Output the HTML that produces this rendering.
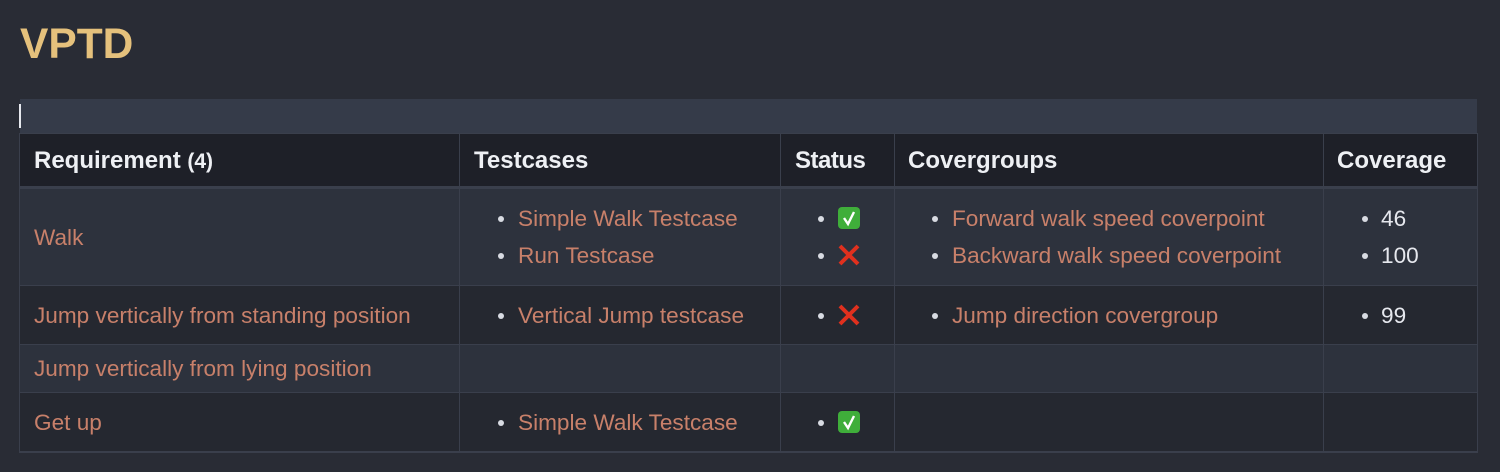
<!DOCTYPE html>
<html><head><style>
*{margin:0;padding:0;box-sizing:border-box}
body{width:1500px;height:472px;background:#292c35;font-family:"Liberation Sans",sans-serif;position:relative;overflow:hidden}
.a{position:absolute}
.t{font-size:22.6px;line-height:24px;white-space:nowrap}
.l{color:#c8806a}
.w{color:#e6e8ee}
.h{font-size:24px;font-weight:bold;color:#eef0f4;line-height:26px;white-space:nowrap}
.b{position:absolute;width:6px;height:6px;border-radius:50%;background:#d8dbe2}
</style></head><body>
<div class="a" style="left:20px;top:22px;font-size:42.5px;font-weight:bold;color:#e5c17c;line-height:46px">VPTD</div>
<div class="a" style="left:20px;top:99px;width:1457px;height:34px;background:#353b49"></div>
<div class="a" style="left:19px;top:104px;width:2px;height:24px;background:#e6e8ee"></div>
<div class="a" style="left:19px;top:133px;width:1459px;height:320px;background:#3a3f4c"></div>
<div class="a" style="left:20px;top:134px;width:1457px;height:52px;background:#1e2028"></div>
<div class="a" style="left:20px;top:189px;width:1457px;height:96px;background:#2d323d"></div>
<div class="a" style="left:20px;top:286px;width:1457px;height:58px;background:#252830"></div>
<div class="a" style="left:20px;top:345px;width:1457px;height:47px;background:#2d323d"></div>
<div class="a" style="left:20px;top:393px;width:1457px;height:58px;background:#252830"></div>
<div class="a" style="left:459px;top:133px;width:1px;height:319px;background:#3a3f4c"></div>
<div class="a" style="left:780px;top:133px;width:1px;height:319px;background:#3a3f4c"></div>
<div class="a" style="left:894px;top:133px;width:1px;height:319px;background:#3a3f4c"></div>
<div class="a" style="left:1323px;top:133px;width:1px;height:319px;background:#3a3f4c"></div>
<div class="a h" style="left:34px;top:148px">Requirement <span style="font-size:21px">(4)</span></div>
<div class="a h" style="left:474px;top:148px">Testcases</div>
<div class="a h" style="left:795px;top:148px;letter-spacing:-0.5px">Status</div>
<div class="a h" style="left:908px;top:148px">Covergroups</div>
<div class="a h" style="left:1337px;top:148px">Coverage</div>
<div class="a t l" style="left:34px;top:226px">Walk</div>
<div class="a t l" style="left:34px;top:304px">Jump vertically from standing position</div>
<div class="a t l" style="left:34px;top:357px">Jump vertically from lying position</div>
<div class="a t l" style="left:34px;top:411px">Get up</div>
<div class="b" style="left:498px;top:216px"></div><div class="a t l" style="left:518px;top:207px">Simple Walk Testcase</div>
<div class="b" style="left:498px;top:253px"></div><div class="a t l" style="left:518px;top:244px">Run Testcase</div>
<div class="b" style="left:498px;top:313px"></div><div class="a t l" style="left:518px;top:304px">Vertical Jump testcase</div>
<div class="b" style="left:498px;top:420px"></div><div class="a t l" style="left:518px;top:411px">Simple Walk Testcase</div>
<div class="b" style="left:818px;top:216px"></div>
<svg class="a" style="left:837px;top:206px" width="24" height="24"><rect x="1" y="1" width="22" height="22" rx="4" fill="#3fae3a"/><path d="M7 12l4 6 6-12" stroke="#fff" stroke-width="2.4" fill="none"/></svg>
<div class="b" style="left:818px;top:253px"></div>
<svg class="a" style="left:837px;top:243px" width="24" height="24"><path d="M3 3l18 18M21 3L3 21" stroke="#e0301e" stroke-width="4"/></svg>
<div class="b" style="left:818px;top:313px"></div>
<svg class="a" style="left:837px;top:303px" width="24" height="24"><path d="M3 3l18 18M21 3L3 21" stroke="#e0301e" stroke-width="4"/></svg>
<div class="b" style="left:818px;top:420px"></div>
<svg class="a" style="left:837px;top:410px" width="24" height="24"><rect x="1" y="1" width="22" height="22" rx="4" fill="#3fae3a"/><path d="M7 12l4 6 6-12" stroke="#fff" stroke-width="2.4" fill="none"/></svg>
<div class="b" style="left:932px;top:216px"></div><div class="a t l" style="left:952px;top:207px">Forward walk speed coverpoint</div>
<div class="b" style="left:932px;top:253px"></div><div class="a t l" style="left:952px;top:244px">Backward walk speed coverpoint</div>
<div class="b" style="left:932px;top:313px"></div><div class="a t l" style="left:952px;top:304px">Jump direction covergroup</div>
<div class="b" style="left:1362px;top:216px"></div><div class="a t w" style="left:1381px;top:207px">46</div>
<div class="b" style="left:1362px;top:253px"></div><div class="a t w" style="left:1381px;top:244px">100</div>
<div class="b" style="left:1362px;top:313px"></div><div class="a t w" style="left:1381px;top:304px">99</div>
</body></html>
